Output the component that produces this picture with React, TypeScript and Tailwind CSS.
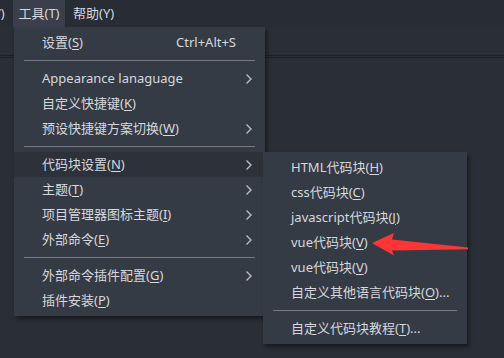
import React from "react";

type Item =
  | { kind: "sep" }
  | { kind: "item"; label: string; key?: string; tail?: string; shortcut?: string; sub?: boolean; active?: boolean };

const font = { fontFamily: '"Noto Sans", "Noto Sans CJK SC", sans-serif' };

const mainItems: Item[] = [
  { kind: "item", label: "设置(", key: "S", tail: ")", shortcut: "Ctrl+Alt+S" },
  { kind: "sep" },
  { kind: "item", label: "Appearance lanaguage", sub: true },
  { kind: "item", label: "自定义快捷键(", key: "K", tail: ")" },
  { kind: "item", label: "预设快捷键方案切换(", key: "W", tail: ")", sub: true },
  { kind: "sep" },
  { kind: "item", label: "代码块设置(", key: "N", tail: ")", sub: true, active: true },
  { kind: "item", label: "主题(", key: "T", tail: ")", sub: true },
  { kind: "item", label: "项目管理器图标主题(", key: "I", tail: ")", sub: true },
  { kind: "item", label: "外部命令(", key: "E", tail: ")", sub: true },
  { kind: "sep" },
  { kind: "item", label: "外部命令插件配置(", key: "G", tail: ")", sub: true },
  { kind: "item", label: "插件安装(", key: "P", tail: ")" },
];

const subItems: Item[] = [
  { kind: "item", label: "HTML代码块(", key: "H", tail: ")" },
  { kind: "item", label: "css代码块(", key: "C", tail: ")" },
  { kind: "item", label: "javascript代码块(", key: "J", tail: ")" },
  { kind: "item", label: "vue代码块(", key: "V", tail: ")" },
  { kind: "item", label: "vue代码块(", key: "V", tail: ")" },
  { kind: "item", label: "自定义其他语言代码块(", key: "O", tail: ")..." },
  { kind: "sep" },
  { kind: "item", label: "自定义代码块教程(", key: "T", tail: ")..." },
];

function Chevron() {
  return (
    <svg width="8" height="12" viewBox="0 0 8 12" className="text-[#b9bdc4]">
      <polyline points="1.5,1.5 6,6 1.5,10.5" fill="none" stroke="currentColor" strokeWidth="1.4" />
    </svg>
  );
}

function MenuList({ items }: { items: Item[] }) {
  return (
    <div className="flex flex-col py-[3px]">
      {items.map((item, i) =>
        item.kind === "sep" ? (
          <div key={i} className="flex h-[11px] items-center px-[10px]">
            <div className="h-px w-full bg-[#74787f]" />
          </div>
        ) : (
          <div
            key={i}
            className={`flex h-[25px] items-center pl-[28px] pr-[12px] text-[13px] text-[#d5d8dd] ${item.active ? "bg-[#2d3139]" : ""}`}
          >
            <span className="flex-1 whitespace-nowrap">
              {item.label}
              {item.key ? <span className="underline underline-offset-2">{item.key}</span> : null}
              {item.tail}
            </span>
            {item.shortcut ? <span className="mr-[17px] whitespace-nowrap">{item.shortcut}</span> : null}
            {item.sub ? <Chevron /> : null}
          </div>
        ),
      )}
    </div>
  );
}

export default function App() {
  return (
    <div className="relative h-[358px] w-[504px] overflow-hidden bg-[#282c34]" style={font}>
      <div className="flex h-[27px] items-center bg-[#282c34] text-[13px] text-[#d5d8dd]">
        <div className="ml-[-44px] w-[57px] whitespace-nowrap px-[7px]">视图(V)</div>
        <div className="flex h-full w-[52px] items-center justify-center bg-[#3a3f4b]">工具(T)</div>
        <div className="px-[8px]">帮助(Y)</div>
      </div>
      <div className="h-[28px] bg-[#2a2e36]" />
      <div className="h-[3px] border-y border-[#1d2025] bg-[#2a2e36]" />
      <div className="h-[300px] bg-[#2a2e36]" />

      <div className="absolute left-[14px] top-[27px] w-[251px] bg-[#353b45] shadow-[2px_3px_4px_rgba(0,0,0,0.45)]">
        <MenuList items={mainItems} />
      </div>

      <div className="absolute left-[263px] top-[152px] w-[204px] bg-[#353b45] shadow-[2px_3px_4px_rgba(0,0,0,0.45)]">
        <MenuList items={subItems} />
      </div>

      <svg className="absolute left-0 top-0" width="504" height="358" viewBox="0 0 504 358">
        <polygon
          points="372,243 394,233 392,239.5 468,247.5 468,249.3 392,250.5 394,255.5"
          fill="#fe3535"
        />
      </svg>
    </div>
  );
}
